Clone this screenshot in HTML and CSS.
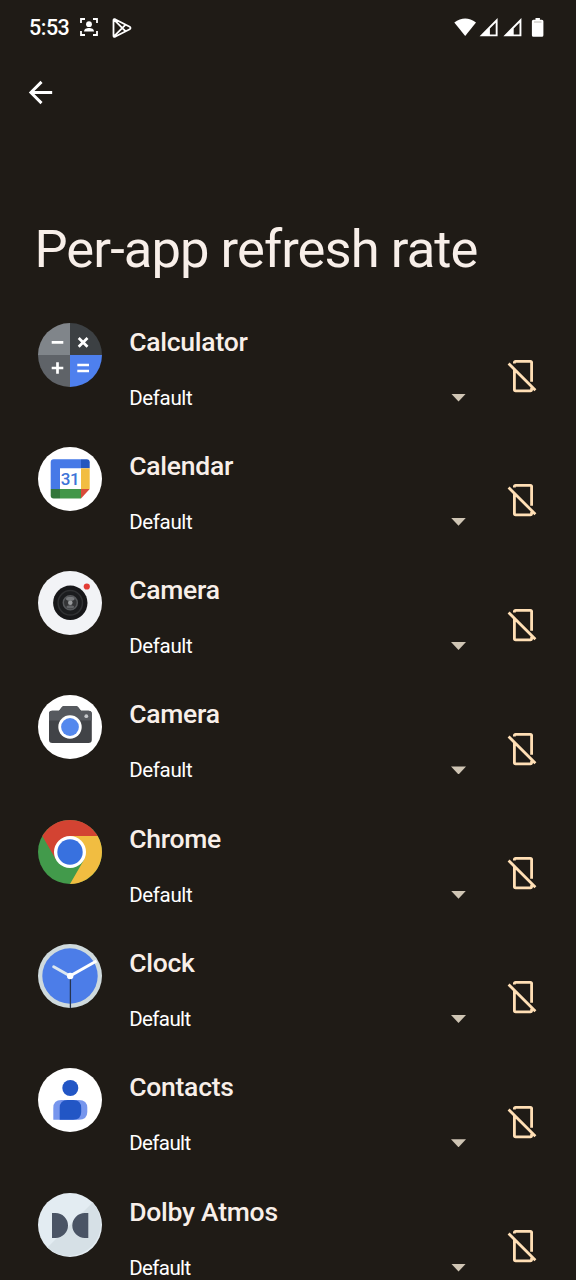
FILE: index.html
```html
<!DOCTYPE html>
<html lang="en">
<head>
  <meta charset="UTF-8">
  <title>Per-app refresh rate</title>
  <meta name="viewport" content="width=device-width, initial-scale=1.0">
  <link rel="stylesheet" href="styles.css">
</head>
<body>
  <svg class="defs" width="0" height="0">
    <symbol id="no-phone" viewBox="0 0 34 36">
      <path d="M8.4 5.5V4.6Q8.4 3.4 9.6 3.4H24.4Q25.6 3.4 25.6 4.6V23.8M8.4 11V31.6Q8.4 32.8 9.6 32.8H24.4Q25.6 32.8 25.6 31.6V29.8M2.6 5.5L29.4 32.3" fill="none" stroke="#ffdfb5" stroke-width="2.8"/>
    </symbol>
  </svg>

  <header class="status">
    <span class="time">5:53</span>
    <svg class="status-face" width="18" height="18" viewBox="0 0 18 18">
      <path d="M1 5V1h4M13 1h4v4M17 13v4h-4M5 17H1v-4" fill="none" stroke="#fff" stroke-width="1.8"/>
      <circle cx="9" cy="6.2" r="2.9" fill="#fff"/>
      <path d="M4 13.6c0-2.6 2.4-3.6 5-3.6s5 1 5 3.6z" fill="#fff"/>
    </svg>
    <svg class="status-play" width="20" height="20" viewBox="0 0 20 20">
      <path d="M1.500 2.200v15.600q0 1.600 1.500 1L17.700 11.200q1.600-1.200 0-2.400L3 1.200q-1.500-.6-1.500 1zM2.200 1.800L13.400 13.200M2.200 18.200L13.400 6.800" fill="none" stroke="#fff" stroke-width="1.800" stroke-linejoin="round"/>
    </svg>
    <svg class="status-right" width="90" height="20" viewBox="0 0 90 20">
      <path d="M0.300 4.400Q11.200-3.400 22 4.400L11.200 18z" fill="#fff"/>
      <path d="M43.600 0V18.200H25.600zM41.700 4.800L35.900 10.600V16.400H41.700z" fill="#fff" fill-rule="evenodd"/>
      <path d="M67.400 0V18.200H49.400zM65.500 4.800L59.700 10.600V16.400H65.500z" fill="#fff" fill-rule="evenodd"/>
      <path d="M81.500 0h4.400v1.800h2q1.500 0 1.500 1.500v14q0 1.500-1.500 1.500h-8.500q-1.500 0-1.500-1.500v-14q0-1.500 1.500-1.500h2.100z" fill="#fff"/>
      <path d="M80 4h7.500" stroke="#aaa6a0" stroke-width="0.800"/>
    </svg>
  </header>

  <nav class="toolbar">
    <svg width="35" height="35" viewBox="0 0 24 24"><path d="M20 11H7.830l5.590-5.590L12 4l-8 8 8 8 1.410-1.410L7.830 13H20z" fill="#fff"/></svg>
  </nav>

  <h1>Per-app refresh rate</h1>

  <ul class="apps">
    <li class="app">
      <svg class="app-icon" viewBox="0 0 64 64">
        <path d="M32 32H0A32 32 0 0 1 32 0z" fill="#80858a"/>
        <path d="M32 32V0A32 32 0 0 1 64 32z" fill="#3c4043"/>
        <path d="M32 32V64A32 32 0 0 1 0 32z" fill="#5f6368"/>
        <path d="M32 32H64A32 32 0 0 1 32 64z" fill="#4e80ee"/>
        <path d="M13.700 19.300H25.300M40.700 15l8.800 8.800M49.500 15l-8.800 8.800M13.700 45H25.300M19.500 39.200V50.800M39.300 42H51M39.300 48H51" stroke="#fff" stroke-width="2.700"/>
      </svg>
      <div class="app-body">
        <div class="app-name">Calculator</div>
        <div class="rate">Default<span class="arrow"></span></div>
      </div>
      <svg class="app-off"><use href="#no-phone"/></svg>
    </li>

    <li class="app">
      <svg class="app-icon" viewBox="0 0 64 64">
        <circle cx="32" cy="32" r="32" fill="#fff"/>
        <path d="M12.700 42V15.300q0-3 3-3H43v9H22V42z" fill="#4679e7"/>
        <path d="M43 12.300h5.700q3 0 3 3v6H43z" fill="#2457be"/>
        <path d="M43 21.300h8.700V42H43z" fill="#f2bd42"/>
        <path d="M22 42h21v9.500H22z" fill="#429749"/>
        <path d="M12.700 42H22v9.500h-6.300q-3 0-3-3z" fill="#32763a"/>
        <path d="M43 42h8.700L43 51.500z" fill="#d94b3a"/>
        <text class="date" x="32" y="38.200" text-anchor="middle">31</text>
      </svg>
      <div class="app-body">
        <div class="app-name">Calendar</div>
        <div class="rate">Default<span class="arrow"></span></div>
      </div>
      <svg class="app-off"><use href="#no-phone"/></svg>
    </li>

    <li class="app">
      <svg class="app-icon" viewBox="0 0 64 64">
        <circle cx="32" cy="32" r="32" fill="#f2f3f6"/>
        <circle cx="32.300" cy="31.800" r="17.200" fill="#171719"/>
        <circle cx="32.300" cy="31.800" r="12.200" fill="#1b1c1e" stroke="#303133" stroke-width="1.500"/>
        <circle cx="32.300" cy="31.800" r="7" fill="#333436" stroke="#56585b" stroke-width="1.500"/>
        <ellipse cx="32.300" cy="27.800" rx="4.300" ry="2" fill="#77797c"/>
        <ellipse cx="32.300" cy="35.800" rx="3.800" ry="1.600" fill="#626467"/>
        <circle cx="32.300" cy="31.800" r="2.300" fill="#999b9d"/>
        <circle cx="48.800" cy="15.500" r="3.100" fill="#e33c35"/>
      </svg>
      <div class="app-body">
        <div class="app-name">Camera</div>
        <div class="rate">Default<span class="arrow"></span></div>
      </div>
      <svg class="app-off"><use href="#no-phone"/></svg>
    </li>

    <li class="app">
      <svg class="app-icon" viewBox="0 0 64 64">
        <circle cx="32" cy="32" r="32" fill="#fff"/>
        <path d="M14 15.700h7l3-3.700q.900-1 2.300-1h11.400q1.400 0 2.300 1l3 3.700h7.500q3.300 0 3.300 3.300v25.700q0 3.300-3.300 3.300H14.300q-3.300 0-3.300-3.300V19q0-3.300 3-3.300z" fill="#414347"/>
        <path d="M11 25.500V19q0-3.300 3.300-3.300H21l3-3.700q.900-1 2.300-1h11.400q1.400 0 2.300 1l3 3.700h7.500q3.300 0 3.300 3.300v6.500z" fill="#56595e"/>
        <circle cx="32" cy="32" r="11.700" fill="#fff"/>
        <circle cx="32" cy="32" r="8.900" fill="#5488ee"/>
        <circle cx="48.300" cy="21.200" r="1.900" fill="#c5c7ca"/>
      </svg>
      <div class="app-body">
        <div class="app-name">Camera</div>
        <div class="rate">Default<span class="arrow"></span></div>
      </div>
      <svg class="app-off"><use href="#no-phone"/></svg>
    </li>

    <li class="app">
      <svg class="app-icon" viewBox="0 0 64 64">
        <circle cx="32" cy="32" r="32" fill="#429a4b"/>
        <path d="M32 16H59.700A32 32 0 0 1 32 64L45.900 40z" fill="#f1bd41"/>
        <path d="M4.300 16A32 32 0 0 1 59.700 16H32L18.200 40z" fill="#d34332"/>
        <circle cx="32" cy="32" r="16" fill="#fff"/>
        <circle cx="32" cy="32" r="12.700" fill="#3871df"/>
      </svg>
      <div class="app-body">
        <div class="app-name">Chrome</div>
        <div class="rate">Default<span class="arrow"></span></div>
      </div>
      <svg class="app-off"><use href="#no-phone"/></svg>
    </li>

    <li class="app">
      <svg class="app-icon" viewBox="0 0 64 64">
        <circle cx="32" cy="32" r="32" fill="#cfdadd"/>
        <circle cx="32" cy="32" r="27.700" fill="#4c7de8"/>
        <path d="M32.400 32V64" stroke="#26344f" stroke-width="1.300"/>
        <path d="M15.700 22.700L32 32" stroke="#dce7ef" stroke-width="3" stroke-linecap="round"/>
        <path d="M32 32L58.500 17" stroke="#fff" stroke-width="3"/>
        <circle cx="32.200" cy="32" r="3.200" fill="#fff"/>
      </svg>
      <div class="app-body">
        <div class="app-name">Clock</div>
        <div class="rate narrow">Default<span class="arrow"></span></div>
      </div>
      <svg class="app-off"><use href="#no-phone"/></svg>
    </li>

    <li class="app">
      <svg class="app-icon" viewBox="0 0 64 64">
        <circle cx="32" cy="32" r="32" fill="#fff"/>
        <path d="M15.300 51.700V40q0-8 8-8h17.500q8.500 0 8.500 8v4q0 7.700-8.500 7.700z" fill="#7796ed"/>
        <path d="M21.700 51.700V40q0-8 8-8h5.500q8 0 8 8v4q0 7.700-8 7.700z" fill="#2256c5"/>
        <circle cx="32.300" cy="20" r="8" fill="#2256c5"/>
      </svg>
      <div class="app-body">
        <div class="app-name">Contacts</div>
        <div class="rate narrow">Default<span class="arrow"></span></div>
      </div>
      <svg class="app-off"><use href="#no-phone"/></svg>
    </li>

    <li class="app">
      <svg class="app-icon" viewBox="0 0 64 64">
        <circle cx="32" cy="32" r="32" fill="#e3ecf2"/>
        <path d="M54.600 9.400A32 32 0 0 1 9.400 54.600z" fill="#d6e0e6"/>
        <path d="M14 20h3.500a12.500 12.500 0 0 1 0 25H14zM50.300 20h-3.500a12.500 12.500 0 0 0 0 25h3.500z" fill="#4a5465"/>
      </svg>
      <div class="app-body">
        <div class="app-name">Dolby Atmos</div>
        <div class="rate narrow">Default<span class="arrow"></span></div>
      </div>
      <svg class="app-off"><use href="#no-phone"/></svg>
    </li>
  </ul>
</body>
</html>
```

FILE: styles.css
```css
* { box-sizing: border-box; }
body { margin: 0; height: 1280px; overflow: hidden; background: #1f1b16; color: #fff; font-family: Roboto, sans-serif; }
svg { display: block; flex-shrink: 0; }
.defs { display: none; }

.status { display: flex; align-items: flex-start; height: 56px; padding: 18px 32px 0 29px; }
.time { width: 51px; font-size: 21.500px; line-height: 20px; font-weight: 500; letter-spacing: -0.500px; white-space: nowrap; }
.status-play { margin-left: 14px; }
.status-right { margin-left: auto; }

.toolbar { height: 165px; padding: 18.500px 0 0 23px; }

h1 { margin: 0; height: 89px; padding-left: 34.500px; font-size: 52.500px; line-height: 56px; font-weight: 400; letter-spacing: -0.920px; color: #f8efe9; white-space: nowrap; }

.apps { margin: 0; padding: 0; list-style: none; }
.app { display: flex; height: 124.300px; padding: 12.500px 36px 0 38.200px; }
.app-icon { width: 64px; height: 64px; }
.app-body { flex: 1; padding-left: 27px; }
.app-name { font-size: 26.500px; line-height: 32px; margin-top: 3px; font-weight: 500; letter-spacing: -0.250px; color: #f8efe9; }
.rate { display: flex; align-items: center; justify-content: space-between; margin-top: 27px; font-size: 20.500px; line-height: 26px; letter-spacing: -0.350px; }
.narrow { letter-spacing: -0.600px; }
.arrow { width: 15px; height: 8px; margin-right: 40px; background: #cfc5b4; clip-path: polygon(0 0, 100% 0, 50% 100%); }
.app-off { width: 34px; height: 36px; margin-top: 35.500px; }
.date { font-size: 17px; font-weight: 500; letter-spacing: -0.500px; fill: #3d73d8; }
```
